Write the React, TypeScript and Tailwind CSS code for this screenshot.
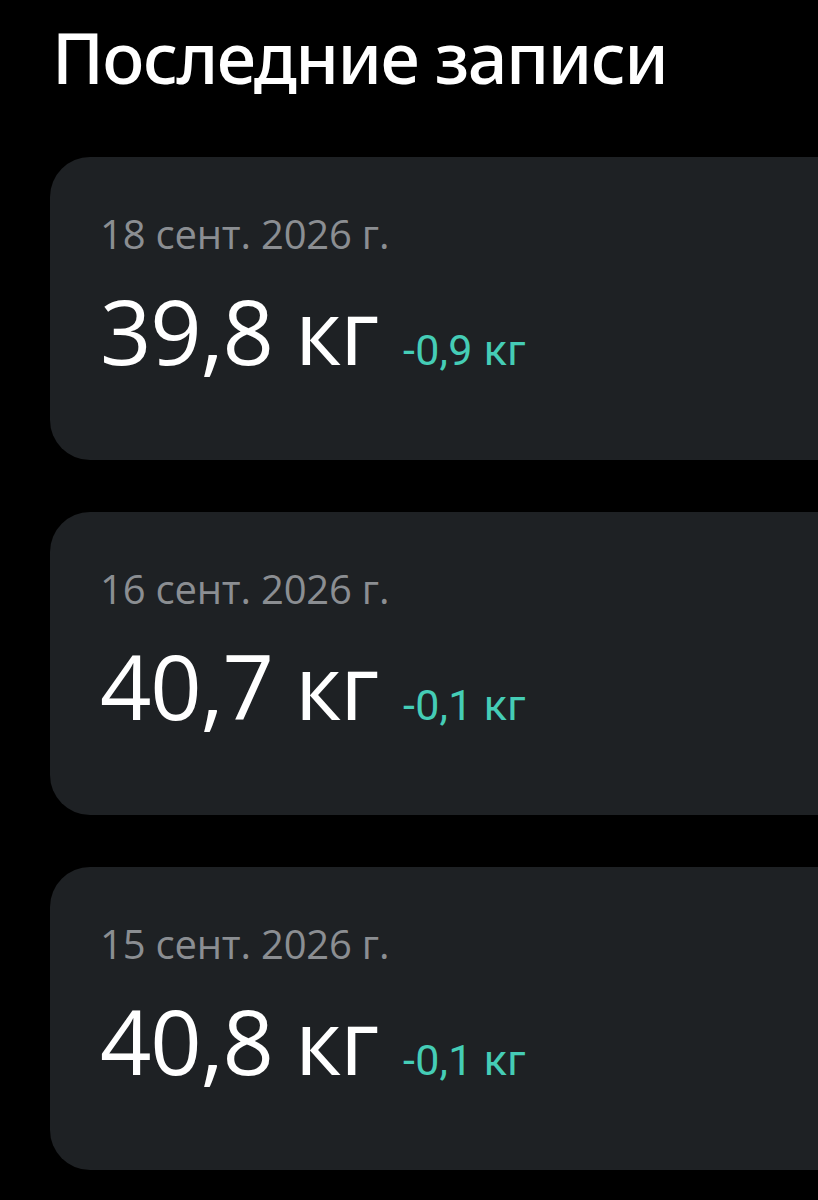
import React from "react";

const entries = [
  { date: "18 сент. 2026 г.", weight: "39,8 кг", delta: "-0,9 кг" },
  { date: "16 сент. 2026 г.", weight: "40,7 кг", delta: "-0,1 кг" },
  { date: "15 сент. 2026 г.", weight: "40,8 кг", delta: "-0,1 кг" },
];

export default function App() {
  return (
    <div className="min-h-[1200px] w-full overflow-hidden bg-black pl-[50px] [font-family:'Noto_Sans','Open_Sans',sans-serif]">
      <h1 className="pt-[22px] pl-[2px] text-[70px] leading-none font-medium text-white tracking-[-1.6px]">
        Последние записи
      </h1>
      <div className="mt-[65px] flex flex-col gap-[52px] mr-[-60px]">
        {entries.map((e) => (
          <div
            key={e.date}
            className="h-[303px] rounded-[40px] bg-[#1e2124] pl-[50px] pt-[57px] flex flex-col"
          >
            <div className="text-[40px] leading-none font-normal text-[#8b8e92] tracking-[-0.2px] [font-family:'Open_Sans',sans-serif]">
              {e.date}
            </div>
            <div className="mt-[31px] flex items-baseline gap-[25px]">
              <span className="text-[90px] leading-none font-normal text-white tracking-[-1.2px] [font-family:'Open_Sans',sans-serif]">
                {e.weight}
              </span>
              <span className="text-[43px] leading-none font-normal text-[#45cdb6] tracking-[0.3px] [font-family:Roboto,sans-serif]">
                {e.delta}
              </span>
            </div>
          </div>
        ))}
      </div>
    </div>
  );
}
